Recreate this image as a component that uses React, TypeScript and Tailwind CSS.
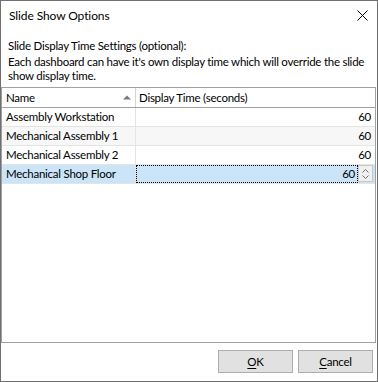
import React from "react";

const font = { fontFamily: 'Lato, "Noto Sans", sans-serif' };

function Row({ name, value, alt }: { name: string; value: string; alt?: boolean }) {
  return (
    <div className={`flex h-[19px] border-b border-[#e4e4e4] ${alt ? "bg-[#f7f7f7]" : "bg-white"}`}>
      <div className="w-[134px] shrink-0 border-r border-[#e4e4e4] pl-[4px] leading-[18px] whitespace-nowrap">{name}</div>
      <div className="flex-1 pr-[4px] text-right leading-[18px]">{value}</div>
    </div>
  );
}

export default function App() {
  return (
    <div
      className="w-[378px] h-[382px] border border-[#6f6f6f] bg-white flex flex-col text-[11.5px] tracking-[-0.25px] text-black overflow-hidden"
      style={font}
    >
      <div className="h-[30px] shrink-0 flex items-center justify-between pl-[8px] pr-[9px]">
        <span className="text-[12px] tracking-[-0.1px]">Slide Show Options</span>
        <svg width="11" height="11" viewBox="0 0 11 11" className="mt-[-1px]">
          <path d="M0.5 0.5 L10.5 10.5 M10.5 0.5 L0.5 10.5" stroke="#000" strokeWidth="1" fill="none" />
        </svg>
      </div>
      <div className="pl-[7px] mt-[7px] leading-[16px] whitespace-nowrap">Slide Display Time Settings (optional):</div>
      <div className="pl-[7px] leading-[14px] whitespace-nowrap mt-[1px]">
        Each dashboard can have it's own display time which will override the slide
        <br />
        show display time.
      </div>
      <div className="mt-[4px] mr-[1px] flex-1 border border-[#a0a0a0] flex flex-col bg-white">
        <div className="flex h-[20px] border-b border-[#a0a0a0] shrink-0">
          <div className="w-[134px] shrink-0 border-r border-[#d5d5d5] pl-[4px] leading-[19px] flex items-center justify-between pr-[4px]">
            <span>Name</span>
            <svg width="8" height="5" viewBox="0 0 8 5">
              <path d="M0 4.5 L4 0.5 L8 4.5 Z" fill="#7a7a7a" />
            </svg>
          </div>
          <div className="flex-1 pl-[3px] leading-[19px] whitespace-nowrap">Display Time (seconds)</div>
        </div>
        <Row name="Assembly Workstation" value="60" />
        <Row name="Mechanical Assembly 1" value="60" alt />
        <Row name="Mechanical Assembly 2" value="60" />
        <div className="flex h-[19px] border-b border-[#e4e4e4] bg-[#cce4f7]">
          <div className="w-[134px] shrink-0 border-r border-[#e4e4e4] pl-[4px] leading-[18px] whitespace-nowrap">Mechanical Shop Floor</div>
          <div className="flex-1 flex">
            <div className="flex-1 border border-dotted border-black text-right pr-[2px] leading-[16px]">60</div>
            <div className="w-[15px] h-[17px] mr-[2px] border border-[#c8c8c8] bg-[#f0f0f0] flex flex-col items-center justify-center gap-[2px]">
              <svg width="7" height="4" viewBox="0 0 7 4">
                <path d="M0.5 3.5 L3.5 0.5 L6.5 3.5" stroke="#707070" strokeWidth="1" fill="none" />
              </svg>
              <svg width="7" height="4" viewBox="0 0 7 4">
                <path d="M0.5 0.5 L3.5 3.5 L6.5 0.5" stroke="#707070" strokeWidth="1" fill="none" />
              </svg>
            </div>
          </div>
        </div>
      </div>
      <div className="h-[38px] shrink-0 flex justify-end items-start gap-[5px] pr-[4px] pt-[7px]">
        <button className="w-[75px] h-[23px] border border-[#adadad] bg-[#e1e1e1] leading-[21px] text-center">
          <span className="underline underline-offset-2">O</span>K
        </button>
        <button className="w-[75px] h-[23px] border border-[#adadad] bg-[#e1e1e1] leading-[21px] text-center">
          <span className="underline underline-offset-2">C</span>ancel
        </button>
      </div>
    </div>
  );
}
